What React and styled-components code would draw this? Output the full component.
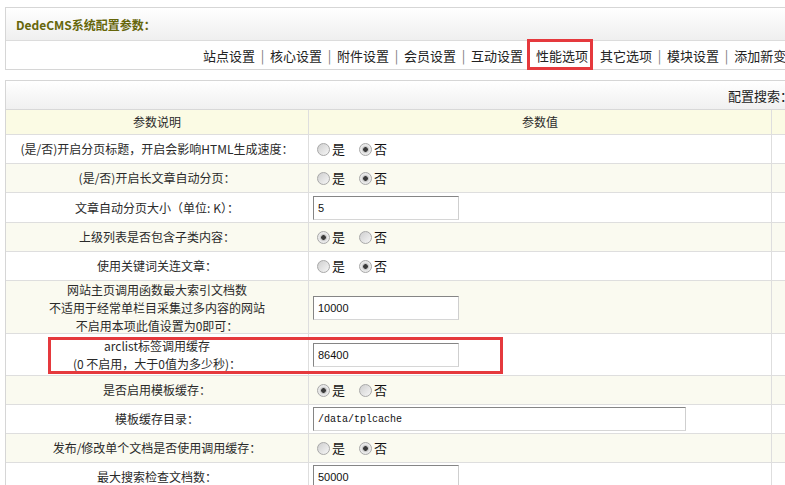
import React from 'react';
import styled, { createGlobalStyle } from 'styled-components';

const GlobalStyle = createGlobalStyle`
  html, body {
    margin: 0;
    padding: 0;
    overflow: hidden;
    background: #fff;
  }
  body {
    font-family: "Noto Sans CJK SC", "Liberation Sans", sans-serif;
    font-size: 12px;
    color: #333;
  }
`;

const Page = styled.div`
  padding: 7px 0 0 5px;
`;

const Panel = styled.div`
  width: 1000px;
  border: 1px solid #d6d6d6;
  margin-bottom: 10px;
  box-sizing: border-box;
`;

const TitleBar = styled.div`
  height: 33px;
  box-sizing: border-box;
  border-bottom: 1px solid #dcdcdc;
  background: linear-gradient(#ffffff, #efefef);
  display: flex;
  align-items: center;
  padding-left: 10px;
  font-weight: bold;
  color: #66660a;
  font-size: 12px;
`;

const Nav = styled.div`
  height: 28px;
  display: flex;
  align-items: center;
  padding-left: 197px;
  font-size: 13px;
  color: #222;
  white-space: nowrap;
`;

const NavItem = styled.span`
  flex: none;
`;

const NavSep = styled.span`
  flex: none;
  width: 15px;
  text-align: center;
  color: #777;
`;

const ActiveNavItem = styled.span`
  flex: none;
  align-self: stretch;
  display: flex;
  align-items: center;
  position: relative;
  padding: 0 5px 0 9px;
  margin: 0 7px 0 4px;
  &::after {
    content: '';
    position: absolute;
    left: 0;
    right: 0;
    top: -2px;
    bottom: -1px;
    border: 3px solid #e5393d;
  }
`;

const SearchBar = styled.div`
  height: 29px;
  box-sizing: border-box;
  border-bottom: 1px solid #d8d8d8;
  background: linear-gradient(#ffffff, #f0f0f0);
  display: flex;
  align-items: center;
  padding-left: 722px;
  font-size: 13px;
  color: #222;
  white-space: nowrap;
`;

const SearchInput = styled.input`
  width: 120px;
  height: 18px;
  border: 1px solid #aaa;
`;

const Row = styled.div`
  position: relative;
  display: grid;
  grid-template-columns: 303px 463px 1fr;
  height: ${p => p.h}px;
  box-sizing: border-box;
  border-bottom: 1px solid #dedede;
  background: ${p => (p.head ? '#fbfbe4' : p.alt ? '#fafaf0' : '#ffffff')};
`;

const Cell = styled.div`
  display: flex;
  align-items: center;
  justify-content: ${p => (p.center ? 'center' : 'flex-start')};
  text-align: ${p => (p.center ? 'center' : 'left')};
  padding-left: ${p => (p.center ? 0 : 4)}px;
  border-right: 1px solid #dedede;
  box-sizing: border-box;
  line-height: 18px;
  color: #2a2a2a;
`;

const LabelLines = styled.div`
  display: flex;
  flex-direction: column;
  align-items: center;
`;

const RadioGroup = styled.div`
  display: flex;
  align-items: center;
`;

const Radio = styled.span`
  width: 13px;
  height: 13px;
  box-sizing: border-box;
  border-radius: 50%;
  border: 1px solid #a8a8a8;
  margin: 0 2px 0 4px;
  background: ${p =>
    p.checked
      ? 'radial-gradient(circle, #3a3a3a 0 2px, #bdbdbd 2.6px, #e6e6e6 4px, #f4f4f4 100%)'
      : 'linear-gradient(135deg, #cfcfcf, #f6f6f6)'};
`;

const RadioText = styled.span`
  font-size: 13px;
  color: #111;
  margin-right: 10px;
`;

const TextInput = styled.input`
  width: ${p => p.w}px;
  height: 24px;
  box-sizing: border-box;
  border: 1px solid;
  border-color: #858585 #cfcfcf #d6d6d6 #858585;
  padding: 0 0 0 4px;
  font-family: ${p => (p.mono ? '"Liberation Mono", monospace' : '"Liberation Sans", sans-serif')};
  font-size: ${p => (p.mono ? 10 : 11)}px;
  color: #111;
  background: #fff;
  outline: none;
`;

const Mark = styled.div`
  position: absolute;
  left: 42px;
  top: 3px;
  width: 455px;
  height: 37px;
  box-sizing: border-box;
  border: 3px solid #e5393d;
`;

const navLeft = ['站点设置', '核心设置', '附件设置', '会员设置', '互动设置'];
const navRight = ['其它选项', '模块设置', '添加新变量'];

const rows = [
  { label: ['(是/否)开启分页标题，开启会影响HTML生成速度：'], radio: false },
  { label: ['(是/否)开启长文章自动分页：'], radio: false },
  { label: ['文章自动分页大小（单位: K）：'], input: '5', h: 30 },
  { label: ['上级列表是否包含子类内容：'], radio: true },
  { label: ['使用关键词关连文章：'], radio: false },
  {
    label: ['网站主页调用函数最大索引文档数', '不适用于经常单栏目采集过多内容的网站', '不启用本项此值设置为0即可：'],
    input: '10000',
    h: 53,
  },
  { label: ['arclist标签调用缓存', '(0 不启用，大于0值为多少秒)：'], input: '86400', h: 42, mark: true },
  { label: ['是否启用模板缓存：'], radio: true },
  { label: ['模板缓存目录：'], input: '/data/tplcache', w: 373, mono: true },
  { label: ['发布/修改单个文档是否使用调用缓存：'], radio: false },
  { label: ['最大搜索检查文档数：'], input: '50000' },
];

const ValueCell = ({ row }) => {
  if (row.input !== undefined) {
    return (
      <Cell>
        <TextInput w={row.w || 146} mono={row.mono} defaultValue={row.input} readOnly />
      </Cell>
    );
  }
  return (
    <Cell>
      <RadioGroup>
        <Radio checked={row.radio} />
        <RadioText>是</RadioText>
        <Radio checked={!row.radio} />
        <RadioText>否</RadioText>
      </RadioGroup>
    </Cell>
  );
};

const App = () => {
  return (
    <>
      <GlobalStyle />
      <Page>
        <Panel>
          <TitleBar>DedeCMS系统配置参数：</TitleBar>
          <Nav>
            {navLeft.map((n, i) => (
              <React.Fragment key={n}>
                <NavItem>{n}</NavItem>
                {i < navLeft.length - 1 && <NavSep>|</NavSep>}
              </React.Fragment>
            ))}
            <ActiveNavItem>性能选项</ActiveNavItem>
            {navRight.map((n, i) => (
              <React.Fragment key={n}>
                <NavItem>{n}</NavItem>
                {i < navRight.length - 1 && <NavSep>|</NavSep>}
              </React.Fragment>
            ))}
          </Nav>
        </Panel>

        <Panel>
          <SearchBar>
            配置搜索：<SearchInput />
          </SearchBar>
          <Row h={25} head>
            <Cell center>参数说明</Cell>
            <Cell center>参数值</Cell>
            <Cell />
          </Row>
          {rows.map((row, i) => (
            <Row key={i} h={row.h || 29} alt={i % 2 === 1}>
              <Cell center>
                <LabelLines>
                  {row.label.map(l => (
                    <span key={l}>{l}</span>
                  ))}
                </LabelLines>
              </Cell>
              <ValueCell row={row} />
              <Cell />
              {row.mark && <Mark />}
            </Row>
          ))}
        </Panel>
      </Page>
    </>
  );
};

export default App;
